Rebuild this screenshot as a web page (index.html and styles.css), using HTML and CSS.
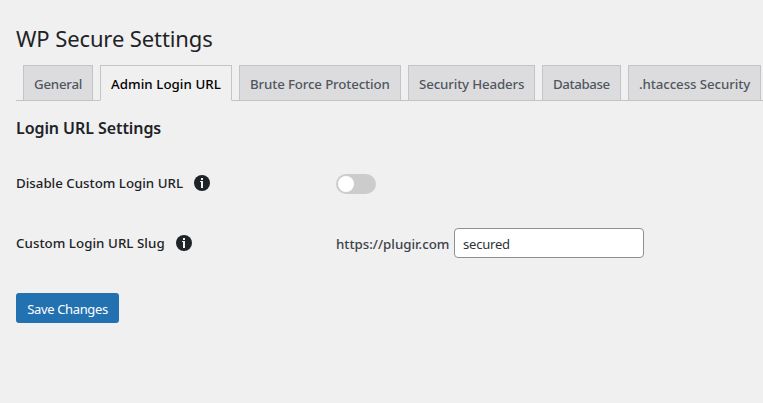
FILE: index.html
```html
<!DOCTYPE html>
<html lang="en">
<head>
<meta charset="utf-8">
<title>WP Secure Settings</title>
<link rel="stylesheet" href="styles.css">
</head>
<body>
<svg class="defs" width="0" height="0" aria-hidden="true">
  <symbol id="info" viewBox="0 0 16 16"><circle cx="8" cy="8" r="8" fill="#1d2327"/><path d="M7 3h2v2H7zM6 6h3v7H7V7H6z" fill="#f0f0f0"/></symbol>
</svg>
<main class="wrap">
  <h1 class="title"><span>WP Secure Settings</span></h1>
  <nav class="tabs">
    <a class="tab general"><span>General</span></a>
    <a class="tab login active"><span>Admin Login URL</span></a>
    <a class="tab brute"><span>Brute Force Protection</span></a>
    <a class="tab headers"><span>Security Headers</span></a>
    <a class="tab database"><span>Database</span></a>
    <a class="tab htaccess"><span>.htaccess Security</span></a>
  </nav>
  <h2 class="section"><span>Login URL Settings</span></h2>
  <form>
    <div class="row">
      <div class="label disable"><span>Disable Custom Login URL</span><svg class="icon"><use href="#info"/></svg></div>
      <div class="switch"><span class="knob"></span></div>
    </div>
    <div class="row">
      <div class="label slug"><span>Custom Login URL Slug</span><svg class="icon"><use href="#info"/></svg></div>
      <div class="domain"><span>https://plugir.com</span></div>
      <input class="field" type="text" value="secured">
    </div>
    <button class="save" type="button"><span>Save Changes</span></button>
  </form>
</main>
</body>
</html>
```

FILE: styles.css
```css
* { box-sizing: border-box; }
body { margin: 0; background: #f0f0f0; color: #1d2327; font: 13px/20px "Noto Sans", sans-serif; overflow: hidden; }
.defs { display: block; }
.wrap { padding: 19px 0 0 16px; }
h1, h2 { margin: 0; }
.title { height: 46px; font-size: 22px; line-height: 38px; font-weight: 400; letter-spacing: -0.11px; white-space: nowrap; }
.tabs { display: flex; gap: 7px; height: 36px; padding-left: 7px; border-bottom: 1px solid #c3c4c7; }
.tab { height: 36px; padding: 8px 0 0 10px; border: 1px solid #c3c4c7; background: #dcdcde; color: #50575e; font-size: 13.3px; line-height: 20px; font-weight: 550; letter-spacing: -0.15px; white-space: nowrap; flex: none; }
.active { background: #f0f0f0; border-bottom-color: #f0f0f0; color: #000; }
.general { width: 70px; letter-spacing: -0.25px; }
.login { width: 132px; letter-spacing: 0.05px; }
.brute { width: 162px; }
.headers { width: 127px; }
.database { width: 79px; letter-spacing: -0.4px; }
.htaccess { width: 133px; letter-spacing: -0.1px; }
.section { margin-top: 15px; height: 37px; font-size: 16px; line-height: 24px; font-weight: 600; letter-spacing: -0.07px; }
.row { display: flex; align-items: center; height: 60px; }
.label { display: flex; align-items: center; gap: 11px; width: 320px; font-size: 13.3px; font-weight: 500; white-space: nowrap; }
.slug { letter-spacing: 0.05px; }
.icon { width: 16px; height: 16px; flex: none; }
.switch { width: 40px; height: 20px; margin-top: 2px; padding: 2px; border-radius: 10px; background: #ccc; }
.knob { display: block; width: 16px; height: 16px; border-radius: 50%; background: #fff; }
.domain { width: 118px; padding-top: 2px; font-size: 13.3px; font-weight: 550; color: #3c434a; white-space: nowrap; }
.field { width: 190px; height: 30px; padding: 2px 8px 0; border: 1px solid #8c8f94; border-radius: 4px; background: #fff; color: #2c3338; font: 13px "Noto Sans", sans-serif; letter-spacing: -0.2px; }
.save { display: block; width: 103px; height: 30px; margin-top: 20px; padding: 2px 0 0; border: 0; border-radius: 3px; background: #2271b1; color: #fff; font: 13px/20px "Noto Sans", sans-serif; letter-spacing: -0.35px; white-space: nowrap; }
```
